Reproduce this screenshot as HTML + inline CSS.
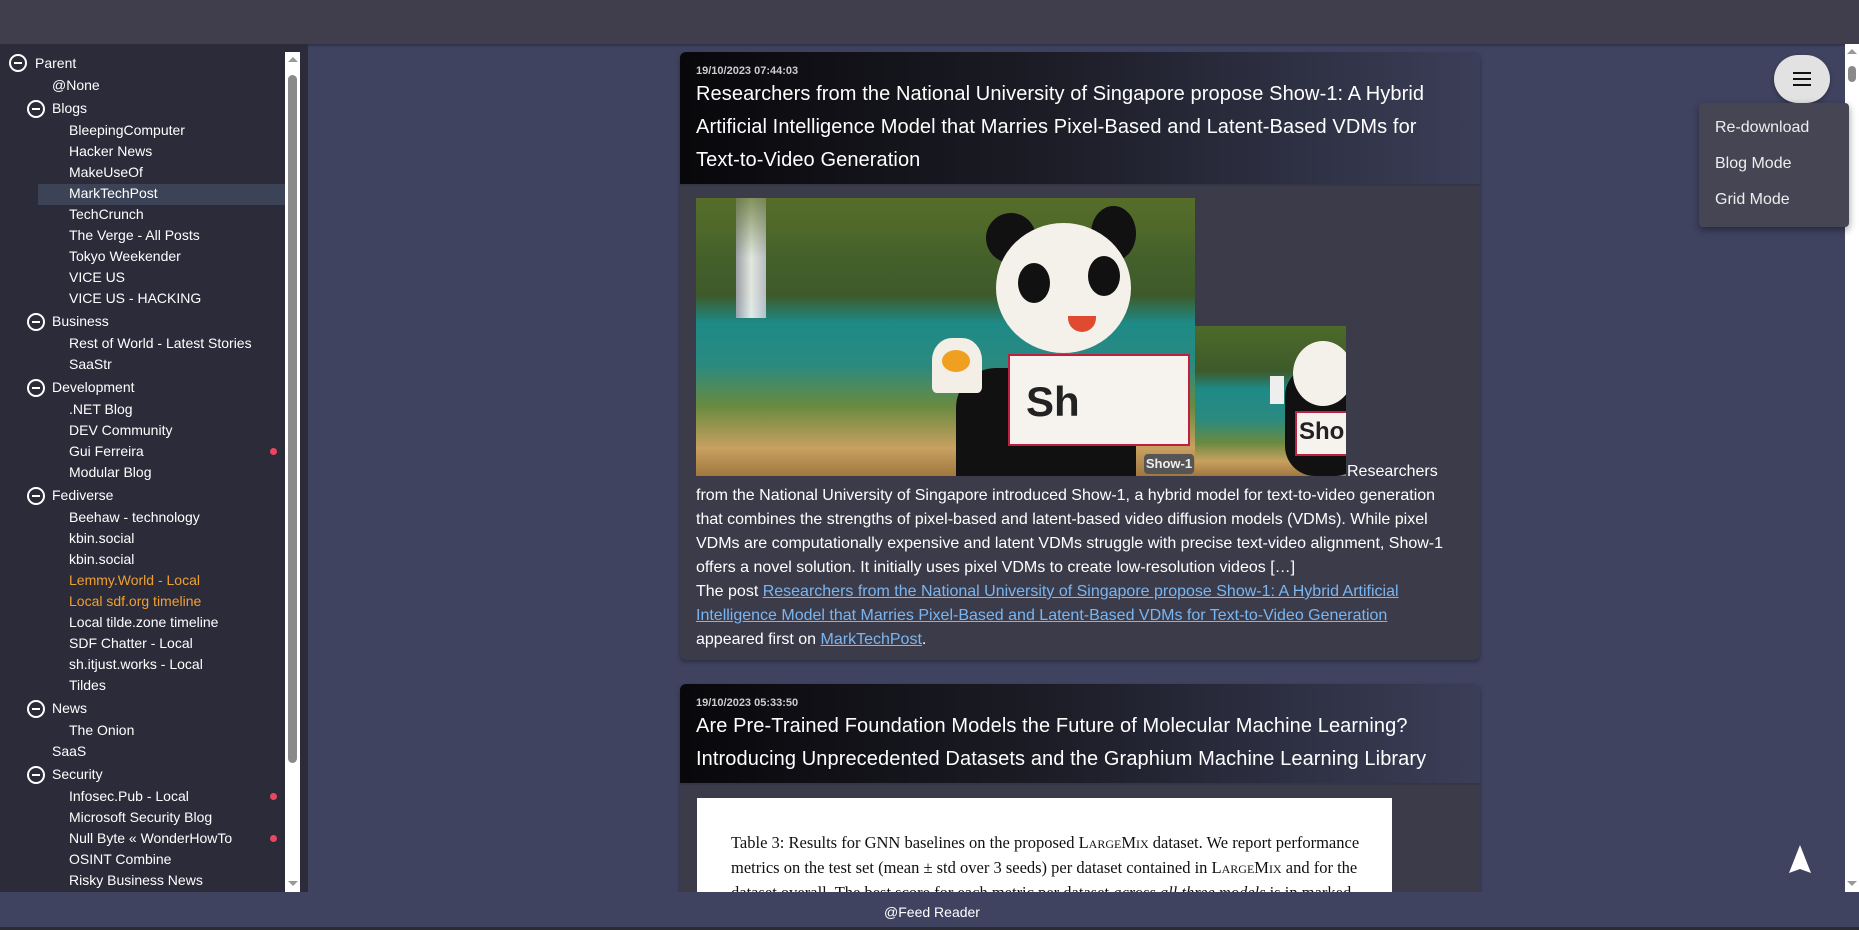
<!DOCTYPE html>
<html><head><meta charset="utf-8"><style>
*{margin:0;padding:0;box-sizing:border-box}
body{width:1859px;height:930px;overflow:hidden;background:#3f4360;font-family:"Liberation Sans",Arial,sans-serif;position:relative}
.top{position:absolute;left:0;top:0;width:1859px;height:44px;background:#403d4d;box-shadow:0 1px 3px rgba(0,0,0,.4)}
.side{position:absolute;left:0;top:44px;width:308px;height:856px;background:#2c2b3a;overflow:hidden}
.sb{position:absolute;left:285px;top:52px;width:15px;height:840px;background:#fff}
.sb .th{position:absolute;left:3px;top:23px;width:9px;height:688px;background:#8a8a8a;border-radius:5px}
.up{position:absolute;left:3px;top:5px;width:0;height:0;border-left:5px solid transparent;border-right:5px solid transparent;border-bottom:5px solid #999}
.dn{position:absolute;left:3px;bottom:6px;width:0;height:0;border-left:5px solid transparent;border-right:5px solid transparent;border-top:5px solid #999}
.r{position:absolute;color:#fff;font-size:14px;line-height:21px;white-space:nowrap}
.ic{position:absolute;width:18px;height:18px;border:2px solid #fff;border-radius:50%}
.ic:after{content:"";position:absolute;left:3px;top:6px;width:8px;height:2px;background:#fff}
.hl{position:absolute;left:38px;top:184px;width:247px;height:21px;background:#3c4356}
.dot{position:absolute;left:270px;width:7px;height:7px;border-radius:50%;background:#ec4561}
.or{color:#f0a030}
.card{position:absolute;left:680px;width:800px;background:#3c3b4a;border-radius:6px;box-shadow:0 2px 4px rgba(0,0,0,.35);overflow:hidden}
.hd{background:linear-gradient(90deg,#08080b 0%,#1c1c26 45%,#3b3e58 100%);padding:0 16px;border-bottom:2px solid #333646;color:#fff}
.dt{font-size:11px;font-weight:bold;color:#ccc;padding-top:12px;line-height:14px}
.tt{font-size:20px;line-height:33px;letter-spacing:0.1px}
.bd{position:relative;color:#fff;font-size:16px;line-height:24px;padding:0 16px}
a{color:#79b6f2;text-decoration:underline}
.foot{position:absolute;left:0;top:892px;width:1859px;height:38px;background:#3f4360}
.foot2{position:absolute;left:0;top:927px;width:1859px;height:3px;background:#2b2b33}
.rsb{position:absolute;left:1845px;top:44px;width:14px;height:848px;background:#fff}
.nw{white-space:nowrap}
</style></head><body>
<div class="top"></div>

<div class="card" style="top:52px;height:608px">
 <div class="hd" style="height:134px"><div class="dt">19/10/2023 07:44:03</div><div class="tt">Researchers from the National University of Singapore propose Show-1: A Hybrid Artificial Intelligence Model that Marries Pixel-Based and Latent-Based VDMs for <span class="nw">Text-to-Video</span> Generation</div></div>
 <div style="position:absolute;left:16px;top:146px;width:499px;height:278px;overflow:hidden;background:linear-gradient(180deg,#4d6a2a 0%,#3e5a2a 35%,#1e8a86 45%,#2a8a80 60%,#6a8a40 75%,#c8a060 90%,#a07840 100%)">
  <div style="position:absolute;left:40px;top:0;width:30px;height:120px;background:linear-gradient(90deg,#aab,#fff,#ccd);opacity:.85"></div>
  <div style="position:absolute;left:0;top:0;width:499px;height:60px;background:linear-gradient(180deg,rgba(90,110,40,.7),rgba(0,0,0,0))"></div>
  <div style="position:absolute;left:260px;top:170px;width:180px;height:120px;background:#111;border-radius:40px 40px 0 0"></div>
  <div style="position:absolute;left:290px;top:15px;width:50px;height:50px;background:#111;border-radius:50%"></div>
  <div style="position:absolute;left:395px;top:8px;width:45px;height:55px;background:#111;border-radius:50%"></div>
  <div style="position:absolute;left:300px;top:25px;width:135px;height:130px;background:#f4f0ea;border-radius:50%"></div>
  <div style="position:absolute;left:322px;top:65px;width:32px;height:40px;background:#111;border-radius:50%"></div>
  <div style="position:absolute;left:392px;top:58px;width:32px;height:40px;background:#111;border-radius:50%"></div>
  <div style="position:absolute;left:372px;top:118px;width:28px;height:16px;background:#e04a30;border-radius:0 0 14px 14px"></div>
  <div style="position:absolute;left:236px;top:140px;width:50px;height:55px;background:#f3eee6;border-radius:40% 40% 10% 10%"></div>
  <div style="position:absolute;left:246px;top:152px;width:28px;height:22px;background:#f0a020;border-radius:50%"></div>
  <div style="position:absolute;left:312px;top:156px;width:182px;height:92px;background:#f6f3ee;border:2px solid #c02040"></div>
  <div style="position:absolute;left:330px;top:180px;font-size:42px;font-weight:bold;color:#222">Sh</div>
  <div style="position:absolute;left:448px;top:256px;width:50px;height:20px;background:#555;border-radius:4px;color:#eee;font-size:13px;font-weight:bold;text-align:center;line-height:20px">Show-1</div>
 </div>
 <div style="position:absolute;left:515px;top:274px;width:151px;height:150px;overflow:hidden;background:linear-gradient(180deg,#4d6a2a 0%,#3e5a2a 30%,#1e8a86 42%,#2a8a80 62%,#6a8a40 78%,#c8a060 90%,#a07840 100%)">
  <div style="position:absolute;left:90px;top:40px;width:80px;height:110px;background:#111;border-radius:30px"></div>
  <div style="position:absolute;left:98px;top:15px;width:60px;height:65px;background:#f4f0ea;border-radius:50%"></div>
  <div style="position:absolute;left:100px;top:85px;width:60px;height:45px;background:#f6f3ee;border:2px solid #c02040"></div>
  <div style="position:absolute;left:104px;top:92px;font-size:24px;font-weight:bold;color:#222">Sho</div>
  <div style="position:absolute;left:75px;top:50px;width:14px;height:28px;background:#eee"></div>
 </div>
 <div class="bd" style="padding-top:298px">
  <div style="position:absolute;left:667px;top:274px">Researchers</div>
  from the National University of Singapore introduced Show-1, a hybrid model for text-to-video generation that combines the strengths of pixel-based and latent-based video diffusion models (VDMs). While pixel VDMs are computationally expensive and latent VDMs struggle with precise text-video alignment, Show-1 offers a novel solution. It initially uses pixel VDMs to create low-resolution videos […]<br>
  The post <a>Researchers from the National University of Singapore propose Show-1: A Hybrid Artificial Intelligence Model that Marries Pixel-Based and Latent-Based VDMs for Text-to-Video Generation</a><br>appeared first on <a>MarkTechPost</a>.
 </div>
</div>

<div class="card" style="top:684px;height:220px">
 <div class="hd" style="height:101px"><div class="dt" style="padding-top:12px">19/10/2023 05:33:50</div><div class="tt">Are Pre-Trained Foundation Models the Future of Molecular Machine Learning? Introducing Unprecedented Datasets and the Graphium Machine Learning Library</div></div>
 <div style="position:absolute;left:17px;top:114px;width:695px;height:120px;background:#fff;padding:33px 0 0 34px;font-family:'Liberation Serif',serif;font-size:16.5px;line-height:24px;color:#111">Table 3: Results for GNN baselines on the proposed L<span style="font-size:12px">ARGE</span>M<span style="font-size:12px">IX</span> dataset. We report performance<br>metrics on the test set (mean ± std over 3 seeds) per dataset contained in L<span style="font-size:12px">ARGE</span>M<span style="font-size:12px">IX</span> and for the<br>dataset overall. The best score for each metric per dataset <i>across all three models</i> is in marked <b style="color:#3a9a6a">green</b>,<br>with the best result per model marked in orange.</div>
</div>

<div class="side">
 <div class="hl" style="top:140px"></div>
 <div class="ic" style="left:9px;top:10px"></div><div class="r" style="left:35px;top:9px">Parent</div>
 <div class="r" style="left:52px;top:31px">@None</div>
 <div class="ic" style="left:27px;top:56px"></div><div class="r" style="left:52px;top:54px">Blogs</div>
 <div class="r" style="left:69px;top:76px">BleepingComputer</div>
 <div class="r" style="left:69px;top:97px">Hacker News</div>
 <div class="r" style="left:69px;top:118px">MakeUseOf</div>
 <div class="r" style="left:69px;top:139px">MarkTechPost</div>
 <div class="r" style="left:69px;top:160px">TechCrunch</div>
 <div class="r" style="left:69px;top:181px">The Verge - All Posts</div>
 <div class="r" style="left:69px;top:202px">Tokyo Weekender</div>
 <div class="r" style="left:69px;top:223px">VICE US</div>
 <div class="r" style="left:69px;top:244px">VICE US - HACKING</div>
 <div class="ic" style="left:27px;top:269px"></div><div class="r" style="left:52px;top:267px">Business</div>
 <div class="r" style="left:69px;top:289px">Rest of World - Latest Stories</div>
 <div class="r" style="left:69px;top:310px">SaaStr</div>
 <div class="ic" style="left:27px;top:335px"></div><div class="r" style="left:52px;top:333px">Development</div>
 <div class="r" style="left:69px;top:355px">.NET Blog</div>
 <div class="r" style="left:69px;top:376px">DEV Community</div>
 <div class="r" style="left:69px;top:397px">Gui Ferreira</div><div class="dot" style="top:404px"></div>
 <div class="r" style="left:69px;top:418px">Modular Blog</div>
 <div class="ic" style="left:27px;top:443px"></div><div class="r" style="left:52px;top:441px">Fediverse</div>
 <div class="r" style="left:69px;top:463px">Beehaw - technology</div>
 <div class="r" style="left:69px;top:484px">kbin.social</div>
 <div class="r" style="left:69px;top:505px">kbin.social</div>
 <div class="r or" style="left:69px;top:526px">Lemmy.World - Local</div>
 <div class="r or" style="left:69px;top:547px">Local sdf.org timeline</div>
 <div class="r" style="left:69px;top:568px">Local tilde.zone timeline</div>
 <div class="r" style="left:69px;top:589px">SDF Chatter - Local</div>
 <div class="r" style="left:69px;top:610px">sh.itjust.works - Local</div>
 <div class="r" style="left:69px;top:631px">Tildes</div>
 <div class="ic" style="left:27px;top:656px"></div><div class="r" style="left:52px;top:654px">News</div>
 <div class="r" style="left:69px;top:676px">The Onion</div>
 <div class="r" style="left:52px;top:697px">SaaS</div>
 <div class="ic" style="left:27px;top:722px"></div><div class="r" style="left:52px;top:720px">Security</div>
 <div class="r" style="left:69px;top:742px">Infosec.Pub - Local</div><div class="dot" style="top:749px"></div>
 <div class="r" style="left:69px;top:763px">Microsoft Security Blog</div>
 <div class="r" style="left:69px;top:784px">Null Byte « WonderHowTo</div><div class="dot" style="top:791px"></div>
 <div class="r" style="left:69px;top:805px">OSINT Combine</div>
 <div class="r" style="left:69px;top:826px">Risky Business News</div>
</div>
<div class="sb"><div class="up"></div><div class="th"></div><div class="dn"></div></div>

<div class="rsb"><div class="up" style="left:2px"></div><div style="position:absolute;left:3px;top:22px;width:8px;height:16px;background:#8a8a8a;border-radius:4px"></div><div class="dn" style="left:2px"></div></div>

<div style="position:absolute;left:1774px;top:55px;width:56px;height:48px;border-radius:24px;background:#e2e2e2;box-shadow:0 2px 4px rgba(0,0,0,.3)">
 <div style="position:absolute;left:19px;top:17px;width:18px;height:2px;background:#111"></div>
 <div style="position:absolute;left:19px;top:23px;width:18px;height:2px;background:#111"></div>
 <div style="position:absolute;left:19px;top:29px;width:18px;height:2px;background:#111"></div>
</div>
<div style="position:absolute;left:1699px;top:103px;width:150px;height:124px;background:#464554;border-radius:4px;box-shadow:0 3px 8px rgba(0,0,0,.4);color:#eee;font-size:16px">
 <div style="position:absolute;left:16px;top:16px">Re-download</div>
 <div style="position:absolute;left:16px;top:52px">Blog Mode</div>
 <div style="position:absolute;left:16px;top:88px">Grid Mode</div>
</div>
<svg style="position:absolute;left:1788px;top:844px" width="24" height="30" viewBox="0 0 24 30"><path d="M12 1 L23 29 L12 25 L1 29 Z" fill="#fff"/></svg>

<div class="foot"><div style="position:absolute;left:0;width:1864px;top:12px;text-align:center;color:#fff;font-size:14px">@Feed Reader</div></div>
<div class="foot2"></div>
</body></html>
